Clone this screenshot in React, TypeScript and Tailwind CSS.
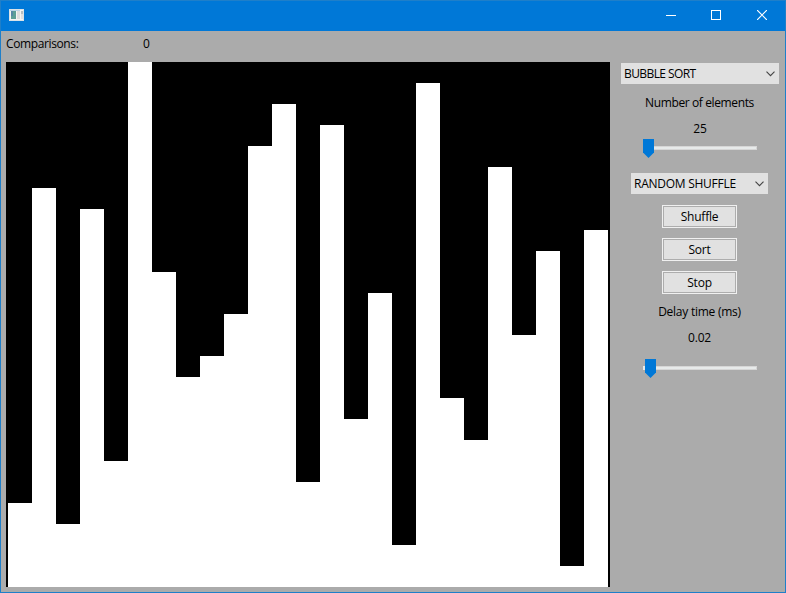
import React from "react";

const VALUES = [4, 19, 3, 18, 6, 25, 15, 10, 11, 13, 21, 23, 5, 22, 8, 14, 2, 24, 9, 7, 20, 12, 16, 1, 17];

function AppIcon() {
  return (
    <svg className="-mt-[3px] ml-2" width="15" height="12" viewBox="0 0 15 12">
      <rect width="15" height="12" fill="#d9e2e8" />
      <rect x="1" y="1" width="13" height="10" fill="#f4f4f2" />
      <rect x="1" y="1" width="10" height="1" fill="#b9d3e6" />
      <rect x="2" y="2" width="5" height="8" fill="#5c9f96" />
      <rect x="2" y="2" width="2" height="5" fill="#5488a5" />
      <rect x="8" y="2" width="3" height="8" fill="#dddddd" />
      <rect x="12" y="2" width="2" height="3" fill="#b6bdc1" />
      <rect x="12" y="5" width="2" height="5" fill="#e0e0e0" />
    </svg>
  );
}

function TitleBar() {
  return (
    <header className="flex h-[30px] shrink-0 items-center bg-[#0078d7]">
      <AppIcon />
      <div className="ml-auto flex h-full items-center text-white">
        <button className="flex h-full w-[45px] items-center justify-center pl-0.5">
          <svg className="-mt-0.5" width="11" height="10" viewBox="0 0 11 10" shapeRendering="crispEdges">
            <path d="M0 5.5h10" stroke="currentColor" />
          </svg>
        </button>
        <button className="flex h-full w-[46px] items-center justify-center">
          <svg className="-mt-0.5" width="10" height="10" viewBox="0 0 10 10" shapeRendering="crispEdges">
            <path d="M.5.5h9v9h-9z" fill="none" stroke="currentColor" />
          </svg>
        </button>
        <button className="flex h-full w-[46px] items-center justify-center">
          <svg className="-mt-0.5" width="10" height="10" viewBox="0 0 10 10">
            <path d="M0 0l10 10M10 0L0 10" stroke="currentColor" strokeWidth="1.2" />
          </svg>
        </button>
      </div>
    </header>
  );
}

function Combo({ label, className }: { label: string; className: string }) {
  return (
    <div className={`flex h-[21px] items-center justify-between bg-[#e1e1e1] pl-[3px] pr-1 ${className}`}>
      <span>{label}</span>
      <svg width="9" height="6" viewBox="0 0 9 6">
        <path d="M.5.7l4 4 4-4" fill="none" stroke="#444" strokeWidth="1.1" />
      </svg>
    </div>
  );
}

function Slider({ className, lead }: { className: string; lead: string }) {
  return (
    <div className={`flex h-5 w-[114px] items-center ${className}`}>
      <div className={`h-1 bg-[#e7eaea] ${lead}`} />
      <svg width="11" height="19" viewBox="0 0 11 19">
        <path d="M0 0h11v13.5L5.5 19 0 13.5z" fill="#0078d7" />
      </svg>
      <div className="h-1 flex-1 border border-[#d6d6d6] border-l-0 bg-[#e7eaea]" />
    </div>
  );
}

function PushButton({ label }: { label: string }) {
  return (
    <button className="h-[23px] w-[75px] border border-[#f0f0f0] p-0">
      <span className="flex h-full w-full items-center justify-center border border-[#adadad] bg-[#e1e1e1]">{label}</span>
    </button>
  );
}

export default function App() {
  return (
    <div className="flex h-[593px] w-[786px] flex-col overflow-hidden border border-[#1f7fc9] bg-[#ababab] font-['Open_Sans','Noto_Sans',sans-serif] text-[12px] leading-4 tracking-[-0.2px] whitespace-nowrap text-black">
      <TitleBar />
      <div className="flex flex-1 pl-[5px]">
        <main className="w-[604px]">
          <div className="flex h-[31px] pt-[5px]">
            <span className="w-[137px] tracking-[-0.38px]">Comparisons:</span>
            <span>0</span>
          </div>
          <div className="flex h-[525px] items-end bg-black px-0.5">
            {VALUES.map((v, i) => (
              <div key={i} className="w-6 bg-white" style={{ height: v * 21 }} />
            ))}
          </div>
        </main>
        <aside className="ml-[11px] flex w-[158px] flex-col items-center pt-8">
          <Combo label="BUBBLE SORT" className="w-[158px] tracking-[-0.58px]" />
          <span className="mr-px mt-[11px] tracking-[-0.38px]">Number of elements</span>
          <span className="mt-[10px]">25</span>
          <Slider className="mt-[1px]" lead="w-0" />
          <Combo label="RANDOM SHUFFLE" className="mr-px mt-[15px] w-[137px] tracking-[-0.26px]" />
          <div className="mr-px mt-[11px] flex flex-col gap-[10px]">
            <PushButton label="Shuffle" />
            <PushButton label="Sort" />
            <PushButton label="Stop" />
          </div>
          <span className="mr-px mt-[10px] tracking-[-0.25px]">Delay time (ms)</span>
          <span className="mr-px mt-[10px]">0.02</span>
          <Slider className="mt-[12px]" lead="w-0.5" />
        </aside>
      </div>
    </div>
  );
}
